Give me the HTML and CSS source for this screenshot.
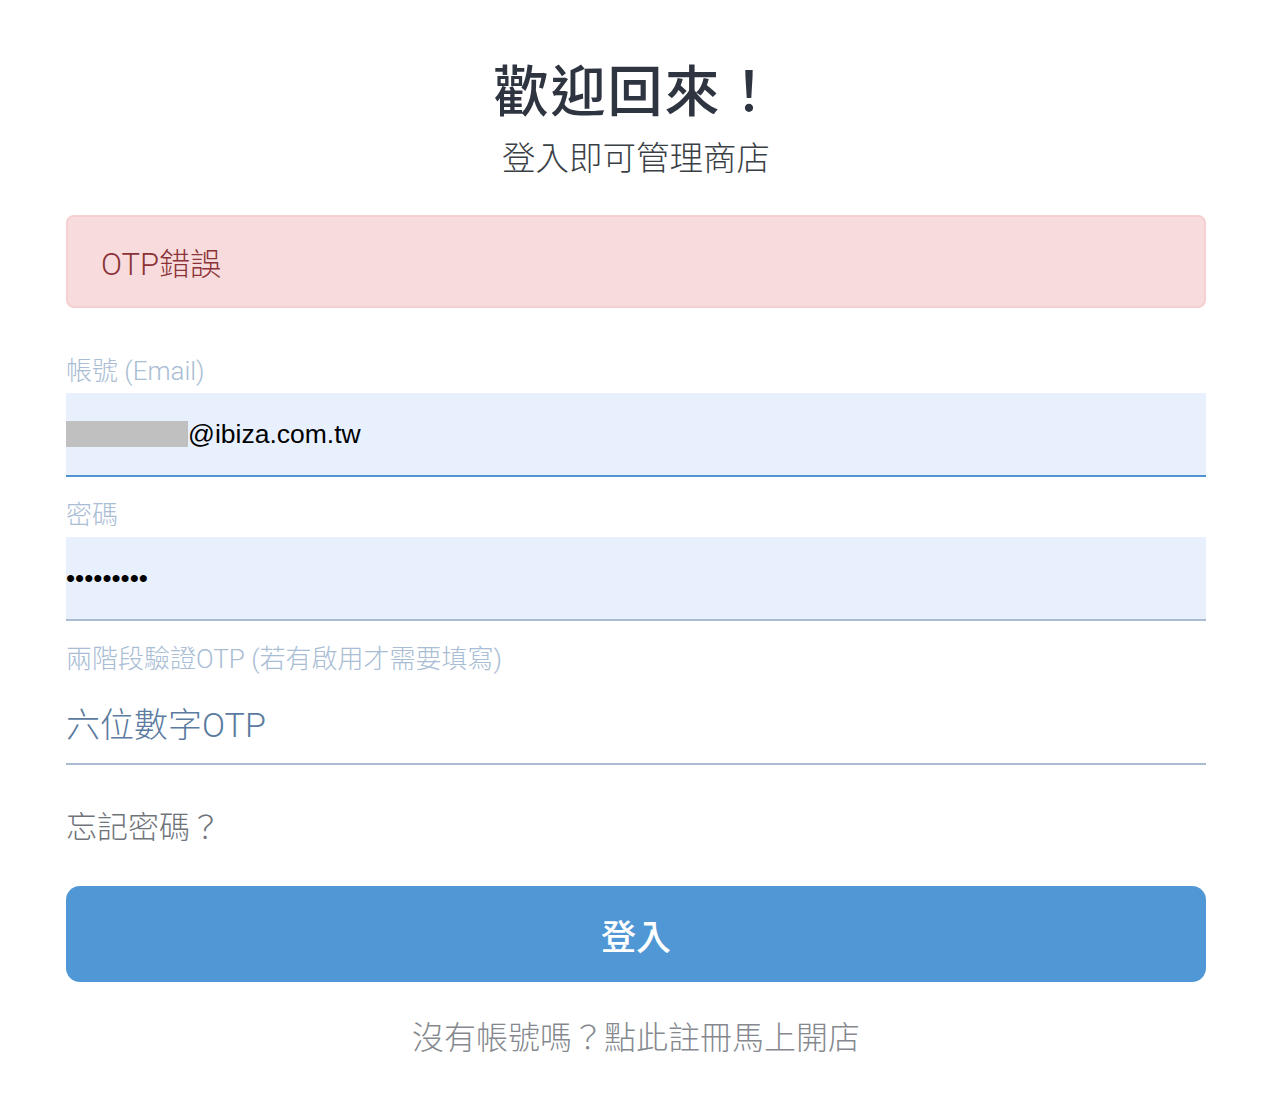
FILE: index.html
```html
<!DOCTYPE html>
<html lang="zh-Hant">

<head>
    <meta charset="UTF-8">
    <meta name="viewport" content="width=device-width, initial-scale=1.0">
    <title>登入</title>
    <link rel="stylesheet" href="styles.css">
</head>

<body>
    <div class="login">
        <div class="login-head">
            <h1 class="title">歡迎回來！</h1>
            <p class="subtitle">登入即可管理商店</p>
        </div>

        <div class="alert">OTP錯誤</div>

        <form class="login-form">
            <div class="field">
                <label class="field-label">帳號 (Email)</label>
                <div class="field-input filled focused">
                    <span class="masked"></span><span class="value">@ibiza.com.tw</span>
                </div>
            </div>

            <div class="field">
                <label class="field-label">密碼</label>
                <div class="field-input filled">
                    <span class="dots">•••••••••</span>
                </div>
            </div>

            <div class="field">
                <label class="field-label">兩階段驗證OTP (若有啟用才需要填寫)</label>
                <div class="field-input otp">
                    <span class="placeholder">六位數字OTP</span>
                </div>
            </div>

            <a class="forgot" href="#">忘記密碼？</a>

            <button class="submit" type="button">登入</button>
        </form>

        <p class="signup">沒有帳號嗎？點此註冊馬上開店</p>
    </div>
</body>

</html>
```

FILE: styles.css
```css
* {
  margin: 0px;
  padding: 0px;
  box-sizing: border-box;
}

body {
  font-family: Roboto, "Noto Sans CJK TC", sans-serif;
  font-weight: 300;
  background-color: #fff;
  color: #333;
}

.login {
  width: 1140px;
  margin-left: 66px;
  padding-top: 52px;
}

.login-head {
  text-align: center;
}

.title {
  font-family: "Noto Sans CJK TC", sans-serif;
  font-size: 55px;
  font-weight: 500;
  letter-spacing: 2px;
  line-height: 70px;
  color: #2f3540;
}

.subtitle {
  font-family: "Noto Sans CJK TC", sans-serif;
  font-size: 33.5px;
  font-weight: 300;
  line-height: 44px;
  color: #3a3f46;
  margin-top: 12px;
}

.alert {
  margin-top: 37px;
  height: 93px;
  display: flex;
  align-items: center;
  padding-left: 33px;
  background-color: #f8dcdd;
  border: 2px solid #f5cfd1;
  border-radius: 8px;
  color: #8a3237;
  font-size: 31px;
}

.login-form {
  display: flex;
  flex-direction: column;
  margin-top: 45px;
}

.field {
  display: flex;
  flex-direction: column;
  margin-bottom: 20px;
}

.field-label {
  font-size: 26px;
  line-height: 36px;
  color: #a9bdd4;
  margin-bottom: 4px;
}

.field-input {
  height: 84px;
  display: flex;
  align-items: center;
  border-bottom: 2px solid #a9bcd2;
}

.filled {
  background-color: #e8f0fe;
}

.focused {
  border-bottom-color: #4f93d3;
}

.masked {
  display: inline-block;
  width: 122px;
  height: 26px;
  background-color: #c0c0c0;
}

.value {
  font-family: "Liberation Sans", Arial, sans-serif;
  font-weight: 400;
  font-size: 26.5px;
  color: #000;
}

.dots {
  font-family: "Liberation Sans", Arial, sans-serif;
  font-weight: 400;
  font-size: 26px;
  color: #000;
}

.otp {
  height: 84px;
}

.placeholder {
  font-size: 34px;
  color: #5b7ba0;
}

.forgot {
  margin-top: 21px;
  font-size: 31px;
  line-height: 44px;
  color: #6f747b;
  text-decoration: none;
}

.submit {
  margin-top: 36px;
  height: 96px;
  border: none;
  border-radius: 14px;
  background-color: #5097d5;
  color: #fff;
  font-family: "Noto Sans CJK TC", sans-serif;
  font-size: 35px;
  font-weight: 500;
}

.signup {
  margin-top: 34px;
  text-align: center;
  font-size: 32px;
  line-height: 44px;
  color: #85898f;
}
```
